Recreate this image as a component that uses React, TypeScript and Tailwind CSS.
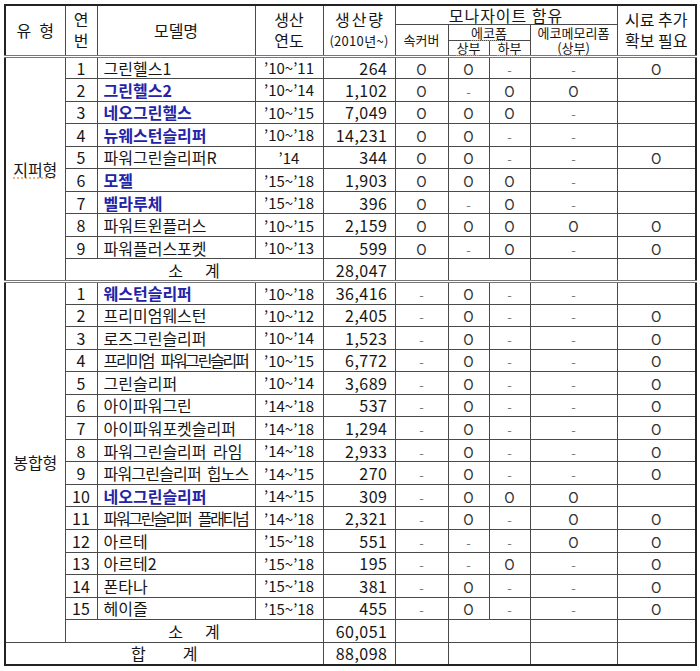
import React from "react";

type Row = {
  no: number;
  name: string;
  bold?: boolean;
  track?: string;
  year: string;
  qty: string;
  cover: string;
  top: string;
  bottom: string;
  memory: string;
  need: string;
};

const zipper: Row[] = [
  { no: 1, name: "그린헬스1", year: "’10~’11", qty: "264", cover: "O", top: "O", bottom: "-", memory: "-", need: "O" },
  { no: 2, name: "그린헬스2", bold: true, year: "’10~’14", qty: "1,102", cover: "O", top: "-", bottom: "O", memory: "O", need: "" },
  { no: 3, name: "네오그린헬스", bold: true, year: "’10~’15", qty: "7,049", cover: "O", top: "O", bottom: "O", memory: "-", need: "" },
  { no: 4, name: "뉴웨스턴슬리퍼", bold: true, year: "’10~’18", qty: "14,231", cover: "O", top: "O", bottom: "-", memory: "-", need: "" },
  { no: 5, name: "파워그린슬리퍼R", year: "’14", qty: "344", cover: "O", top: "O", bottom: "-", memory: "-", need: "O" },
  { no: 6, name: "모젤", bold: true, year: "’15~’18", qty: "1,903", cover: "O", top: "O", bottom: "O", memory: "-", need: "" },
  { no: 7, name: "벨라루체", bold: true, year: "’15~’18", qty: "396", cover: "O", top: "-", bottom: "O", memory: "-", need: "" },
  { no: 8, name: "파워트윈플러스", year: "’10~’15", qty: "2,159", cover: "O", top: "O", bottom: "O", memory: "O", need: "O" },
  { no: 9, name: "파워플러스포켓", year: "’10~’13", qty: "599", cover: "O", top: "-", bottom: "O", memory: "-", need: "O" },
];

const sewn: Row[] = [
  { no: 1, name: "웨스턴슬리퍼", bold: true, year: "’10~’18", qty: "36,416", cover: "-", top: "O", bottom: "-", memory: "-", need: "" },
  { no: 2, name: "프리미엄웨스턴", year: "’10~’12", qty: "2,405", cover: "-", top: "O", bottom: "-", memory: "-", need: "O" },
  { no: 3, name: "로즈그린슬리퍼", year: "’10~’14", qty: "1,523", cover: "-", top: "O", bottom: "-", memory: "-", need: "O" },
  { no: 4, name: "프리미엄 파워그린슬리퍼", track: "tracking-[-2.3px] [word-spacing:6px]", year: "’10~’15", qty: "6,772", cover: "-", top: "O", bottom: "-", memory: "-", need: "O" },
  { no: 5, name: "그린슬리퍼", year: "’10~’14", qty: "3,689", cover: "-", top: "O", bottom: "-", memory: "-", need: "O" },
  { no: 6, name: "아이파워그린", year: "’14~’18", qty: "537", cover: "-", top: "O", bottom: "-", memory: "-", need: "O" },
  { no: 7, name: "아이파워포켓슬리퍼", year: "’14~’18", qty: "1,294", cover: "-", top: "O", bottom: "-", memory: "-", need: "O" },
  { no: 8, name: "파워그린슬리퍼 라임", track: "[word-spacing:3px]", year: "’14~’18", qty: "2,933", cover: "-", top: "O", bottom: "-", memory: "-", need: "O" },
  { no: 9, name: "파워그린슬리퍼 힙노스", track: "tracking-[-0.8px] [word-spacing:3px]", year: "’14~’15", qty: "270", cover: "-", top: "O", bottom: "-", memory: "-", need: "O" },
  { no: 10, name: "네오그린슬리퍼", bold: true, year: "’14~’15", qty: "309", cover: "-", top: "O", bottom: "O", memory: "O", need: "" },
  { no: 11, name: "파워그린슬리퍼 플래티넘", track: "tracking-[-2.3px] [word-spacing:6px]", year: "’14~’18", qty: "2,321", cover: "-", top: "O", bottom: "-", memory: "O", need: "O" },
  { no: 12, name: "아르테", year: "’15~’18", qty: "551", cover: "-", top: "-", bottom: "-", memory: "O", need: "O" },
  { no: 13, name: "아르테2", year: "’15~’18", qty: "195", cover: "-", top: "-", bottom: "O", memory: "-", need: "O" },
  { no: 14, name: "폰타나", year: "’15~’18", qty: "381", cover: "-", top: "O", bottom: "-", memory: "-", need: "O" },
  { no: 15, name: "헤이즐", year: "’15~’18", qty: "455", cover: "-", top: "O", bottom: "-", memory: "-", need: "O" },
];

const cell = "border border-[#4a4a4a] p-0";
const squiggle = "underline decoration-dotted decoration-[#e8a060] underline-offset-2";

const Mark = ({ v }: { v: string }) =>
  v === "O" ? (
    <span className="text-[14px] text-[#333]">O</span>
  ) : v === "-" ? (
    <span className="text-[13px] text-[#777]">-</span>
  ) : null;

const DataRow = ({ r, first, label }: { r: Row; first: boolean; label?: React.ReactNode }) => (
  <tr className="h-[22.55px]">
    {first && label}
    <td className={`${cell} text-center`}>{r.no}</td>
    <td className={`${cell} pl-[6px] whitespace-nowrap overflow-hidden`}>
      <span className={(r.bold ? "font-bold text-[#2323a8] " : "") + (r.track ?? "")}>
        {r.name}
      </span>
    </td>
    <td className={`${cell} text-center text-[15px]`}>{r.year}</td>
    <td className={`${cell} text-right pr-[7px] tracking-[0.5px]`}>{r.qty}</td>
    <td className={`${cell} text-center`}><Mark v={r.cover} /></td>
    <td className={`${cell} text-center`}><Mark v={r.top} /></td>
    <td className={`${cell} text-center`}><Mark v={r.bottom} /></td>
    <td className={`${cell} text-center`}><Mark v={r.memory} /></td>
    <td className={`${cell} text-center`}><Mark v={r.need} /></td>
  </tr>
);

const SumRow = ({ label, value, total, last }: { label: React.ReactNode; value: string; total?: boolean; last?: boolean }) => (
  <tr className={`h-[22.55px] ${last ? "border-b-[3px] border-double border-b-[#777]" : ""}`}>
    <td className={`${cell} text-center`} colSpan={total ? 4 : 3}>
      {label}
    </td>
    <td className={`${cell} text-right pr-[7px] tracking-[0.5px]`}>{value}</td>
    <td className={cell}></td>
    <td className={cell} colSpan={2}></td>
    <td className={cell}></td>
    <td className={cell}></td>
  </tr>
);

export default function App() {
  return (
    <div className="bg-white w-[700px] h-[671px] overflow-hidden pt-[4px] pl-[4px] font-['Noto_Sans_CJK_KR',sans-serif] text-[16px] leading-none text-[#161616]">
      <table className="table-fixed border-collapse w-[691px] border-2 border-[#222]">
        <colgroup>
          <col className="w-[60px]" />
          <col className="w-[32px]" />
          <col className="w-[158px]" />
          <col className="w-[68px]" />
          <col className="w-[72px]" />
          <col className="w-[53px]" />
          <col className="w-[41px]" />
          <col className="w-[41px]" />
          <col className="w-[87px]" />
          <col className="w-[79px]" />
        </colgroup>
        <thead>
          <tr className="h-[19px]">
            <td className={`${cell} text-center`} rowSpan={3}>
              <span className="inline-flex gap-[8px]"><span>유</span><span>형</span></span>
            </td>
            <td className={`${cell} text-center leading-[21px]`} rowSpan={3}>
              연<br />번
            </td>
            <td className={`${cell} text-center`} rowSpan={3}>모델명</td>
            <td className={`${cell} text-center leading-[21px]`} rowSpan={3}>
              생산<br />연도
            </td>
            <td className={`${cell} text-center`} rowSpan={3}>
              <div className="leading-[21px] tracking-[2px] pl-[2px]">생산량</div>
              <div className="text-[13px] leading-[21px] tracking-[0.3px]">(2010년~)</div>
            </td>
            <td className={`${cell} text-center text-[16px] tracking-[1px]`} colSpan={4}>모나자이트 함유</td>
            <td className={`${cell} text-center text-[16px] leading-[21px]`} rowSpan={3}>
              시료 추가<br />확보 필요
            </td>
          </tr>
          <tr className="h-[16px]">
            <td className={`${cell} text-center text-[13px]`} rowSpan={2}>속커버</td>
            <td className={`${cell} text-center text-[13px]`} colSpan={2}>
              <span className={squiggle}>에코폼</span>
            </td>
            <td className={`${cell} text-center text-[13px] leading-[15px]`} rowSpan={2}>
              에코메모리폼<br />
              <span className={squiggle}>(상부)</span>
            </td>
          </tr>
          <tr className="h-[14px] border-b-[3px] border-double border-b-[#777]">
            <td className={`${cell} text-center text-[13px]`}>
              <span className={squiggle}>상부</span>
            </td>
            <td className={`${cell} text-center text-[13px]`}>
              <span className={squiggle}>하부</span>
            </td>
          </tr>
        </thead>
        <tbody>
          {zipper.map((r, i) => (
            <DataRow
              key={"z" + r.no}
              r={r}
              first={i === 0}
              label={
                <td className={`${cell} text-center border-b-[3px] border-double border-b-[#777]`} rowSpan={10}>
                  <span className={squiggle}>지퍼형</span>
                </td>
              }
            />
          ))}
          <SumRow
            last
            label={<span className="inline-flex gap-[22px]"><span>소</span><span>계</span></span>}
            value="28,047"
          />
          {sewn.map((r, i) => (
            <DataRow
              key={"s" + r.no}
              r={r}
              first={i === 0}
              label={
                <td className={`${cell} text-center`} rowSpan={16}>
                  봉합형
                </td>
              }
            />
          ))}
          <SumRow
            label={<span className="inline-flex gap-[22px]"><span>소</span><span>계</span></span>}
            value="60,051"
          />
          <SumRow
            total
            label={<span className="inline-flex gap-[37px]"><span>합</span><span>계</span></span>}
            value="88,098"
          />
        </tbody>
      </table>
    </div>
  );
}
